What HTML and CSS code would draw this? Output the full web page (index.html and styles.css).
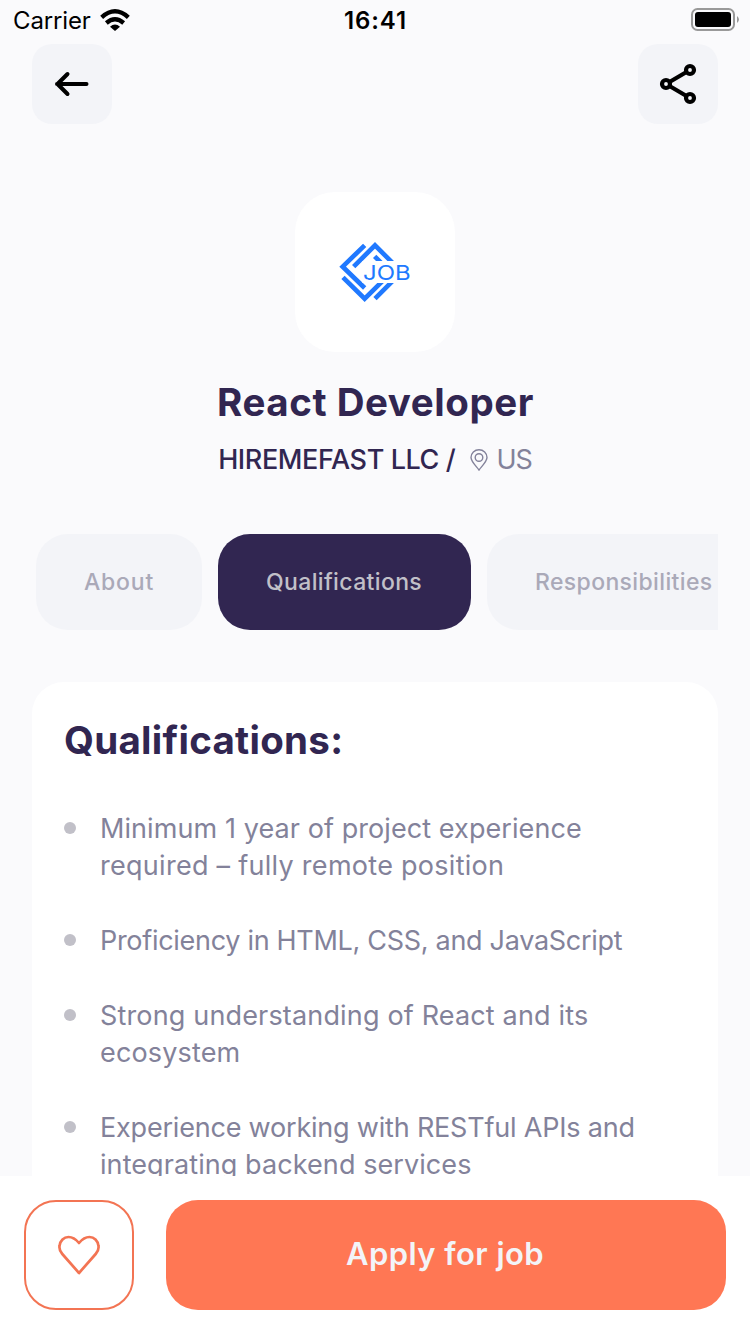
FILE: index.html
```html
<!DOCTYPE html>
<html lang="en">
<head>
<meta charset="utf-8">
<title>React Developer</title>
<link rel="stylesheet" href="styles.css">
</head>
<body>
<div class="screen">
  <header class="status">
    <div class="carrier"><span class="carrier-name">Carrier</span>
      <svg class="wifi" viewBox="0 0 90 66"><g fill="none" stroke="#000" stroke-width="13"><path d="M5 25Q45-11 85 25"/><path d="M19 42Q45 20 71 42"/></g><path d="M45 66 30 53Q45 40 60 53Z"/></svg>
    </div>
    <time class="clock">16:41</time>
    <svg class="battery" viewBox="0 0 48 24"><rect x="1" y="1" width="42" height="21" rx="5.5" fill="none" stroke="#999" stroke-width="2"/><rect x="4" y="4" width="36" height="15" rx="3" fill="#000"/><path d="M46 8Q50 11.500 46 15Z" fill="#999"/></svg>
  </header>
  <nav class="toolbar">
    <button class="tool" aria-label="Back"><svg viewBox="0 0 80 80"><path d="M54.500 40H25M35.500 30 25.500 40l10 10" fill="none" stroke="#000" stroke-width="4" stroke-linecap="round" stroke-linejoin="round"/></svg></button>
    <button class="tool" aria-label="Share"><svg viewBox="0 0 80 80"><g fill="none" stroke="#000" stroke-width="4.200"><circle cx="28" cy="40" r="4"/><circle cx="52" cy="26" r="4"/><circle cx="52" cy="54" r="4"/><path d="M31.500 38 48.500 28M31.500 42 48.500 52"/></g></svg></button>
  </nav>
  <section class="company">
    <div class="logo"><svg viewBox="30 30 480 480"><g fill="none" stroke="#2079ff" stroke-width="14"><path d="M239 190 173 254 239 318"/><path d="M206 254 270 190 325 245"/><path d="M174 286 239 350 297 293"/><path d="M270 350 327 293"/><path d="M269 223 290 244"/></g><path d="M232 237H340V303H232Z" fill="#fff"/><text x="234" y="293" textLength="143" lengthAdjust="spacingAndGlyphs" class="logo-text">JOB</text></svg></div>
    <h1 class="title">React Developer</h1>
    <div class="meta"><span class="name">HIREMEFAST LLC /</span><svg class="pin" viewBox="0 0 18 22"><g fill="none" stroke="#83829a" stroke-width="1.400"><path d="M9 21C6.500 17.500 1 12.500 1 8.500a8 7.800 0 0 1 16 0C17 12.500 11.500 17.500 9 21Z"/><circle cx="9" cy="8.500" r="3.800"/></g></svg><span class="place">US</span></div>
  </section>
  <div class="tabs">
    <button class="tab t1">About</button>
    <button class="tab t2 active">Qualifications</button>
    <button class="tab t3">Responsibilities</button>
  </div>
  <main class="card">
    <h2 class="heading">Qualifications:</h2>
    <ul class="list">
      <li class="item"><span class="dot"></span><p class="copy"><span class="open">Minimum 1 year of project experience</span><br><span class="wide">required – fully remote position</span></p></li>
      <li class="item"><span class="dot"></span><p class="copy"><span class="tighter">Proficiency in HTML, CSS, and JavaScript</span></p></li>
      <li class="item"><span class="dot"></span><p class="copy loose">Strong understanding of React and its<br>ecosystem</p></li>
      <li class="item"><span class="dot"></span><p class="copy"><span class="tight">Experience working with RESTful APIs and</span><br><span class="open">integrating backend services</span></p></li>
    </ul>
  </main>
  <footer class="actions">
    <button class="like" aria-label="Save"><svg viewBox="0 0 42 40"><path d="M21 38 4.300 19C1.500 15.800 1.300 12.500 1.500 11 2 5.500 6 2 10.500 2 15.500 2 18.500 5 21 8 23.500 5 26.500 2 31.500 2 36 2 40 5.500 40.500 11 40.700 12.500 40.500 15.800 37.700 19Z" fill="none" stroke="#f37453" stroke-width="2.700" stroke-linejoin="round"/></svg></button>
    <button class="apply">Apply for job</button>
  </footer>
</div>
</body>
</html>
```
FILE: styles.css
```css
* { box-sizing: border-box; }
body { margin: 0; font-family: Inter, "Liberation Sans", sans-serif; color: #312651; background: #fafafc; }
button { border: 0; padding: 0; font-family: inherit; }
svg { display: block; }
h1, h2, p, ul { margin: 0; padding: 0; }
.screen { width: 750px; height: 1334px; overflow: hidden; display: flex; flex-direction: column; }
.status { height: 44px; flex: none; display: grid; grid-template-columns: 1fr auto 1fr; padding: 0 12px 0 13px; color: #000; line-height: 41px; }
.carrier { display: flex; gap: 9px; font-size: 24px; letter-spacing: -0.150px; }
.wifi { width: 30px; height: 22px; margin-top: 9px; }
.clock { font-size: 24px; font-weight: 600; letter-spacing: 0.900px; }
.battery { width: 48px; height: 24px; margin: 8px -1px 0 0; justify-self: end; }
.toolbar { height: 80px; flex: none; padding: 0 32px; display: flex; justify-content: space-between; }
.tool { width: 80px; height: 80px; border-radius: 20px; background: #f3f4f8; }
.company { flex: none; height: 410px; padding-top: 68px; display: flex; flex-direction: column; align-items: center; }
.logo { width: 160px; height: 160px; border-radius: 40px; background: #fff; }
.logo-text { font: 400 62px Inter, sans-serif; fill: #2079ff; }
.title { font-size: 38.500px; font-weight: 650; line-height: 52px; letter-spacing: 0.550px; margin: 24px 0 0 1px; white-space: nowrap; }
.meta { display: flex; align-items: center; height: 36px; margin-top: 13px; font-size: 27px; white-space: nowrap; }
.name { font-weight: 500; letter-spacing: -0.400px; }
.pin { width: 18px; height: 22px; margin: 2px 8px 0 15px; }
.place { color: #83829a; letter-spacing: -1px; }
.tabs { flex: none; height: 96px; margin: 0 32px; padding-left: 4px; display: flex; gap: 16px; overflow: hidden; }
.tab { flex: none; height: 96px; border-radius: 32px; background: #f3f4f8; color: #aaa9b8; font-size: 23px; font-weight: 500; letter-spacing: 0.360px; padding-left: 48px; text-align: left; white-space: nowrap; }
.t1 { width: 166px; letter-spacing: 0.800px; }
.t2 { width: 253px; }
.t3 { width: 276px; }
.active { background: #312651; color: #c1c0c8; }
.card { flex: 1; min-height: 0; overflow: hidden; margin: 52px 32px 0; padding: 32px; border-radius: 32px 32px 0 0; background: #fff; }
.heading { font-size: 38.500px; font-weight: 650; line-height: 52px; letter-spacing: 0.280px; }
.list { list-style: none; margin-top: 44px; display: flex; flex-direction: column; gap: 37.500px; }
.item { display: flex; gap: 24px; }
.dot { flex: none; width: 12px; height: 12px; border-radius: 50%; margin-top: 12px; background: #c1c0c8; }
.copy { font-size: 27px; line-height: 37.200px; color: #83829a; white-space: nowrap; }
.open { letter-spacing: 0.080px; }
.loose { letter-spacing: 0.160px; }
.wide { letter-spacing: 0.280px; }
.tight { letter-spacing: -0.200px; }
.tighter { letter-spacing: -0.300px; }
.actions { flex: none; height: 158px; padding: 24px; display: flex; gap: 32px; background: #fff; }
.like { width: 110px; height: 110px; border: 2px solid #f37453; border-radius: 32px; background: #fff; display: grid; place-items: center; }
.like svg { width: 42px; height: 40px; }
.apply { flex: 1; height: 110px; padding: 0 2px 3px 0; border-radius: 32px; background: #ff7754; color: #f3f4f8; font-size: 31px; font-weight: 600; letter-spacing: 0.450px; }
```
